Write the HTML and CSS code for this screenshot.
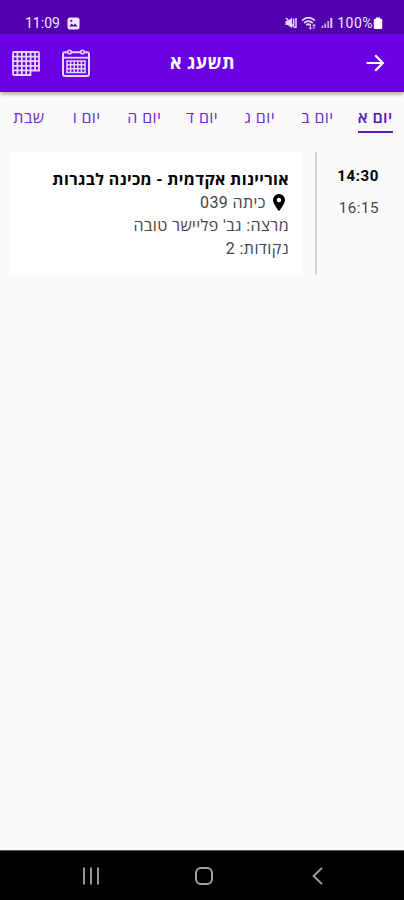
FILE: index.html
```html
<!DOCTYPE html>
<html lang="he" dir="rtl">
<head>
<meta charset="UTF-8">
<title>מערכת שעות</title>
<meta name="viewport" content="width=device-width, initial-scale=1.0">
<link rel="stylesheet" href="styles.css">
</head>
<body>
 <div class="app">
  <div class="statusbar" dir="ltr">
    <span class="clock">11:09</span>
    <svg class="picture" width="13" height="13" viewBox="0 0 13 13"><rect x=".5" y=".5" width="12" height="12" rx="2.5" fill="#f1e8fb"/><path d="M2.3 9.6l2.4-3 1.8 1.8 1.6-2 2.6 3.2z" fill="#5300ae"/><circle cx="4.3" cy="3.8" r="1.1" fill="#5300ae"/></svg>
    <div class="signals">
      <svg width="12" height="12" viewBox="0 0 12 12"><path d="M.5 4h2.3L7 .8v10.4L2.8 8H.5z" fill="#e5d6f5"/><path d="M1 1l9 10M8.600 1.500v7M11 1v10" stroke="#e5d6f5" stroke-width="1.5" fill="none"/></svg>
      <svg width="16" height="14" viewBox="0 0 16 14"><path d="M1 4.6Q7.5-1.4 14 4.6M3.2 7q4.3-3.8 8.6 0M5.3 9.2q2.2-1.9 4.4 0" stroke="#e5d6f5" stroke-width="1.7" fill="none"/><path d="M9.4 8v5M7.8 11.5l1.6 1.700 1.6-1.700M13 13V8.500M11.500 10l1.500-1.600 1.500 1.600" stroke="#e5d6f5" fill="none"/></svg>
      <svg width="12" height="12" viewBox="0 0 12 12"><path d="M1.5 8.5V11M4.3 6.5V11M7.2 4V11" stroke="#c8a9ea" stroke-width="1.800"/><path d="M10.3 1v10" stroke="#e5d6f5" stroke-width="1.900"/></svg>
    </div>
    <span class="percent">100%</span>
    <svg class="battery" width="10" height="13" viewBox="0 0 10 13"><path d="M3 .5h4v1.3h1.2q1 0 1 1v8.2q0 1-1 1H1.8q-1 0-1-1V2.8q0-1 1-1H3z" fill="#fff"/></svg>
  </div>

  <div class="toolbar">
    <svg class="back" width="20" height="20" viewBox="0 0 20 20"><path d="M1.5 10h16M10.2 2.3L17.8 10l-7.6 7.7" fill="none" stroke="#fff" stroke-width="2.2"/></svg>
    <h1>תשעג א</h1>
    <div class="actions">
      <svg width="28" height="28" viewBox="0 0 28 28" fill="none" stroke="#e6d5fb" stroke-width="1.5"><path d="M6 3.2H3q-2 0-2 2V25q0 2 2 2h22q2 0 2-2V5.2q0-2-2-2h-3M9 3.2h10" stroke-width="2"/><path d="M1 8.700h26" stroke-width="1.800"/><circle cx="7.5" cy="3" r="1.8"/><circle cx="20.5" cy="3" r="1.8"/><path d="M5 12h18v11.5H5zM5 15.8h18M5 19.7h18M8.6 12v11.5M12.200 12v11.500M15.800 12v11.500M19.400 12v11.500"/></svg>
      <svg width="28" height="25" viewBox="0 0 28 25" fill="none" stroke="#e6d5fb" stroke-width="1.8"><path d="M2 1h24q1 0 1 1v17.5h-8.500V24H2q-1 0-1-1V2q0-1 1-1zM1 5.600h26M1 10.200h26M1 14.800h26M1 19.400h18M5.400 1v23M9.800 1v23M14.200 1v23M18.600 1v19M23 1v18.500"/></svg>
    </div>
  </div>

  <div class="tabs">
    <div class="tab active"><span>יום א</span></div>
    <div class="tab"><span>יום ב</span></div>
    <div class="tab"><span>יום ג</span></div>
    <div class="tab"><span>יום ד</span></div>
    <div class="tab"><span>יום ה</span></div>
    <div class="tab"><span>יום ו</span></div>
    <div class="tab"><span>שבת</span></div>
  </div>

  <div class="lesson">
    <div class="hours">
      <div class="start">14:30</div>
      <div class="end">16:15</div>
    </div>
    <div class="card">
      <h2>אוריינות אקדמית - מכינה לבגרות</h2>
      <div class="line room">
        <svg width="12" height="17" viewBox="0 0 12 17"><path d="M6 0a6 6 0 0 0-6 6c0 4.3 6 11 6 11s6-6.7 6-11a6 6 0 0 0-6-6zm0 8.200a2.200 2.200 0 1 1 0-4.400 2.200 2.200 0 0 1 0 4.400z" fill="#000"/></svg>
        <span>כיתה 039</span>
      </div>
      <div class="line">מרצה: גב' פליישר טובה</div>
      <div class="line">נקודות: 2</div>
    </div>
  </div>

  <div class="navbar" dir="ltr">
    <svg width="18" height="18" viewBox="0 0 18 18"><path d="M2 .5v17M9 .5v17M16 .5v17" stroke="#969696" stroke-width="2"/></svg>
    <svg width="20" height="20" viewBox="0 0 20 20"><rect x="2" y="2" width="16" height="16" rx="5" fill="none" stroke="#a4a4a4" stroke-width="2"/></svg>
    <svg width="16" height="18" viewBox="-4 0 16 18"><path d="M10 .8L1.500 9l8.500 8.200" fill="none" stroke="#a4a4a4" stroke-width="1.800"/></svg>
  </div>
 </div>
</body>
</html>
```

FILE: styles.css
```css
*{box-sizing:border-box}
body{margin:0;background:#fafafa;font-family:Roboto,"Open Sans","DejaVu Sans",sans-serif;color:#000}
svg{display:block;flex:none}
.app{height:100vh;display:flex;flex-direction:column}

.statusbar{height:34px;padding:12px 21px 0 25px;background:#5300ae;display:flex;align-items:center;color:#f1e8fb;font-size:14px;line-height:22px}
.picture{margin-left:7px}
.signals{display:flex;align-items:center;gap:4px;margin-left:auto}
.percent{margin-left:4px;letter-spacing:.5px}
.battery{margin-left:0}

.toolbar{height:58px;padding:0 19px 0 12px;background:#6a00e4;display:flex;align-items:center;justify-content:space-between;box-shadow:0 2px 4px rgba(0,0,0,.35);color:#fff}
.toolbar h1{flex:1;margin:0;padding-right:130px;font-size:18px;line-height:24px;font-weight:700;letter-spacing:.4px}
.actions{display:flex;align-items:center;gap:22px}

.tabs{display:grid;grid-template-columns:repeat(7,1fr);padding-top:14px;color:#7428cb;font-size:16px;line-height:24px;letter-spacing:.4px}
.tab{display:flex;justify-content:center}
.tab span{height:27px;white-space:nowrap}
.active{color:#5714bd;font-weight:600}
.active span{border-bottom:2px solid #6017c7}

.lesson{display:flex;height:123px;margin-top:19px;padding-left:9px}
.hours{width:89px;padding-right:25px;border-left:2px solid #d4d4d4;font-size:15px;line-height:24px;letter-spacing:.6px}
.start{margin-top:12px;font-weight:700}
.end{margin-top:8px;color:#444}
.card{flex:1;margin-right:12px;padding:17px 14px 0 0;background:#fff;border-radius:4px}
.card h2{margin:0;font-size:16px;line-height:22px;font-weight:700;letter-spacing:.37px;white-space:nowrap}
.line{font-size:16px;line-height:23px;letter-spacing:.4px;color:#444;white-space:nowrap}
.room{display:flex;align-items:center;gap:7px;padding-right:4px}

.navbar{height:50px;margin-top:auto;padding:0 80px 0 82px;background:#000;border-top:1px solid #555;display:flex;align-items:center;justify-content:space-between}
```
